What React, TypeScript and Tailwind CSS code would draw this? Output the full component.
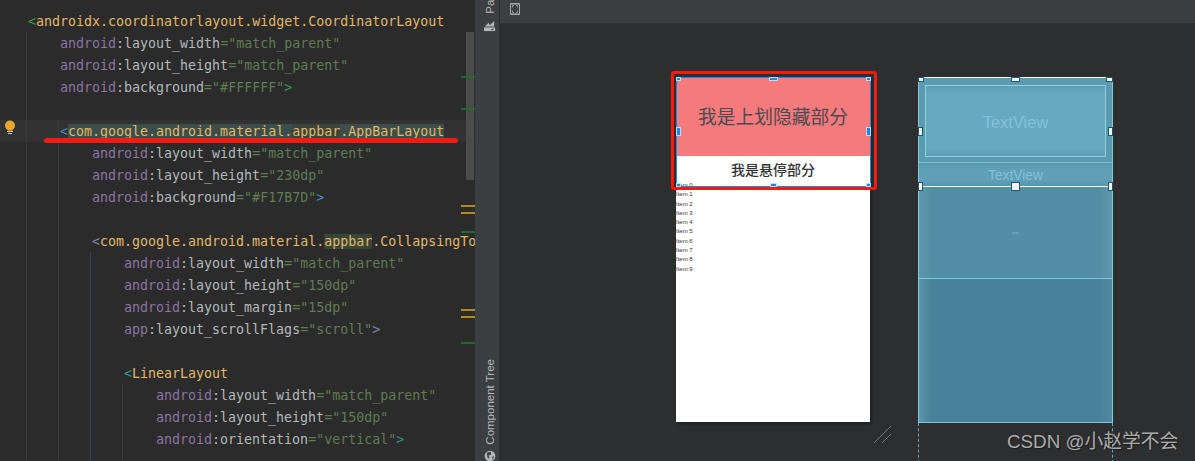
import React from "react";

type Tone = "ns" | "attr" | "val" | "tag" | "blue" | "green" | "slate" | "teal" | "hlTag" | "hlApp";
const toneClass: Record<Tone, string> = {
  ns: "text-[#8f73a3]",
  attr: "text-[#b3b9b9]",
  val: "text-[#5f7c52]",
  tag: "text-[#e5b765]",
  green: "text-[#3f9b4f]",
  blue: "text-[#4a88c7]",
  slate: "text-[#7d86b5]",
  teal: "text-[#2b9c8a]",
  hlTag: "text-[#e5b765] bg-[#3a4f4c]",
  hlApp: "text-[#e5b765] bg-[#3a4539]",
};
type Seg = [string, Tone];
const attr = (ns: string, name: string, value: string, close?: [string, Tone]): Seg[] => {
  const s: Seg[] = [[ns, "ns"], [":" + name, "attr"], ['="' + value + '"', "val"]];
  if (close) s.push(close);
  return s;
};
const indentClass = ["pl-[28px]", "pl-[60px]", "pl-[92px]", "pl-[124px]", "pl-[156px]"];

const lines: { i: number; s: Seg[]; active?: boolean }[] = [
  { i: 0, s: [["<", "green"], ["androidx.coordinatorlayout.widget.CoordinatorLayout", "tag"]] },
  { i: 1, s: attr("android", "layout_width", "match_parent") },
  { i: 1, s: attr("android", "layout_height", "match_parent") },
  { i: 1, s: attr("android", "background", "#FFFFFF", [">", "green"]) },
  { i: 0, s: [] },
  {
    i: 1,
    active: true,
    s: [
      ["<", "blue"],
      ["com.google.android.material.", "hlTag"],
      ["appbar", "hlApp"],
      [".AppBarLayout", "hlTag"],
    ],
  },
  { i: 2, s: attr("android", "layout_width", "match_parent") },
  { i: 2, s: attr("android", "layout_height", "230dp") },
  { i: 2, s: attr("android", "background", "#F17B7D", [">", "blue"]) },
  { i: 0, s: [] },
  {
    i: 2,
    s: [
      ["<", "slate"],
      ["com.google.android.material.", "tag"],
      ["appbar", "hlApp"],
      [".CollapsingToolbarLayout", "tag"],
    ],
  },
  { i: 3, s: attr("android", "layout_width", "match_parent") },
  { i: 3, s: attr("android", "layout_height", "150dp") },
  { i: 3, s: attr("android", "layout_margin", "15dp") },
  { i: 3, s: attr("app", "layout_scrollFlags", "scroll", [">", "slate"]) },
  { i: 0, s: [] },
  { i: 3, s: [["<", "teal"], ["LinearLayout", "tag"]] },
  { i: 4, s: attr("android", "layout_width", "match_parent") },
  { i: 4, s: attr("android", "layout_height", "150dp") },
  { i: 4, s: attr("android", "orientation", "vertical", [">", "teal"]) },
];

function CodePanel() {
  return (
    <div className="relative w-[475px] h-full shrink-0 overflow-hidden bg-[#2b2b2b] pt-[10px] font-['DejaVu_Sans_Mono',monospace] text-[13.3px] leading-[24px]">
      {lines.map((l, n) => (
        <div
          key={n}
          className={`h-[22px] whitespace-pre ${indentClass[l.i]} ${l.active ? "bg-[#323232]" : ""}`}
        >
          {l.s.map(([t, tone], k) => (
            <span key={k} className={toneClass[tone]}>
              {t}
            </span>
          ))}
        </div>
      ))}

      {/* indent guides */}
      <div className="absolute left-[26px] top-[32px] bottom-0 w-px bg-[#3a3a3a]" />
      <div className="absolute left-[58px] top-[120px] bottom-0 w-px bg-[#3a3a3a]" />
      <div className="absolute left-[90px] top-[252px] bottom-0 w-px bg-[#3b3f5e]" />
      <div className="absolute left-[122px] top-[384px] bottom-0 w-px bg-[#3a3a3a]" />

      {/* lightbulb */}
      <svg className="absolute left-[4px] top-[120px]" width="13" height="16" viewBox="0 0 13 16">
        <circle cx="6" cy="5.5" r="5" fill="#eaa52b" />
        <rect x="3.5" y="8" width="5" height="2.5" fill="#eaa52b" />
        <rect x="3" y="11" width="6" height="1" fill="#c9c9c9" />
        <rect x="4" y="13" width="4" height="1" fill="#c9c9c9" />
      </svg>

      {/* scrollbar */}
      <div className="absolute left-[466px] top-[32px] w-[8px] h-[148px] bg-[#4b4b4b]" />

      {/* error stripe marks */}
      <div className="absolute left-[461px] top-[76px] w-[14px] h-[2px] bg-[#1f6b2c]" />
      <div className="absolute left-[461px] top-[108px] w-[14px] h-[2px] bg-[#1f6b2c]" />
      <div className="absolute left-[461px] top-[205px] w-[14px] h-[2px] bg-[#b5891e]" />
      <div className="absolute left-[461px] top-[212px] w-[14px] h-[2px] bg-[#b5891e]" />
      <div className="absolute left-[461px] top-[231px] w-[14px] h-[2px] bg-[#1f6b2c]" />
      <div className="absolute left-[461px] top-[309px] w-[14px] h-[2px] bg-[#b5891e]" />
      <div className="absolute left-[461px] top-[316px] w-[14px] h-[2px] bg-[#b5891e]" />
      <div className="absolute left-[461px] top-[342px] w-[14px] h-[2px] bg-[#1f6b2c]" />

      {/* red annotation underline */}
      <div className="absolute left-[44px] top-[138px] w-[414px] h-[5px] rounded-full bg-[#f5190f]" />
    </div>
  );
}

function SideStrip() {
  return (
    <div className="relative w-[24px] h-full shrink-0 bg-[#3c3f41] text-[#b4b8ba] font-['Liberation_Sans',sans-serif] text-[11.5px]">
      <span className="absolute left-[8px] top-[-3px] [writing-mode:vertical-rl] rotate-180 leading-[14px]">Pal</span>
      <svg className="absolute left-[9px] top-[20px]" width="12" height="12" viewBox="0 0 13 13">
        <rect x="0" y="8" width="12" height="4" fill="#b4b8ba" />
        <rect x="8" y="9.5" width="2" height="1.5" fill="#3c3f41" />
        <path d="M1 7 L5 3 L7 7 Z M5 7 L11 1 L11 7 Z" fill="#b4b8ba" />
      </svg>
      <span className="absolute left-[8px] bottom-[16px] [writing-mode:vertical-rl] rotate-180 leading-[14px]">
        Component Tree
      </span>
      <svg className="absolute left-[9px] bottom-[-1px]" width="12" height="12" viewBox="0 0 13 13">
        <circle cx="6.5" cy="6.5" r="5.8" fill="#b4b8ba" />
        <path d="M3 3 L7 2 L8 5 L5 6 L6 9 L4 9 Z M9 7 L11 7 L9 11 Z" fill="#3c3f41" />
      </svg>
    </div>
  );
}

function Handle({ cls }: { cls: string }) {
  return <div className={`absolute bg-[#1c86f2] border border-white/70 ${cls}`} />;
}
function WhiteHandle({ cls }: { cls: string }) {
  return <div className={`absolute bg-[#f4fbff] border border-[#20566b] ${cls}`} />;
}

function DesignPhone() {
  return (
    <div className="relative w-[194px] h-[345px] shrink-0 bg-white shadow-[2px_2px_3px_rgba(0,0,0,0.35)]">
      <div className="h-[79px] bg-[#f47a7c] flex items-center justify-center text-[18.75px] text-[#4c4a52] font-['Noto_Sans_CJK_SC',sans-serif]">
        我是上划隐藏部分
      </div>
      <div className="h-[30px] flex items-start justify-center text-[14px] leading-[26px] font-medium text-[#333] font-['Noto_Sans_CJK_SC',sans-serif]">
        我是悬停部分
      </div>
      <div className="-mt-[5px] text-[6px] leading-[9.3px] text-[#333] font-['Liberation_Sans',sans-serif]">
        {["Item 0", "Item 1", "Item 2", "Item 3", "Item 4", "Item 5", "Item 6", "Item 7", "Item 8", "Item 9"].map((t) => (
          <div key={t}>{t}</div>
        ))}
      </div>

      {/* selection */}
      <div className="absolute left-0 top-0 w-[195px] h-[110px] border border-[#1c86f2]" />
      <Handle cls="left-0 top-0 w-[5px] h-[4px]" />
      <Handle cls="left-[93px] top-0 w-[9px] h-[4px]" />
      <Handle cls="left-[190px] top-0 w-[5px] h-[4px]" />
      <Handle cls="left-0 top-[50px] w-[5px] h-[9px]" />
      <Handle cls="left-[190px] top-[50px] w-[5px] h-[9px]" />
      <Handle cls="left-0 top-[106px] w-[5px] h-[4px]" />
      <Handle cls="left-[94px] top-[106px] w-[7px] h-[4px]" />
      <Handle cls="left-[190px] top-[106px] w-[5px] h-[4px]" />

      {/* red annotation box */}
      <div className="absolute -left-[5px] -top-[6px] w-[206px] h-[119px] rounded-[3px] border-[3px] border-[#f01c12]" />
    </div>
  );
}

function Blueprint() {
  return (
    <div className="relative w-[195px] h-[346px] shrink-0 flex flex-col border-x border-[#78cde0] font-['Liberation_Sans',sans-serif] text-[#82c3d8]">
      <div className="h-[85px] bg-[#5b9bb1] px-[6px] pt-[7px] border-t border-white">
        <div className="h-[72px] bg-[linear-gradient(180deg,#5f9fb6,#68a9c2_12%,#68a9c2_88%,#5f9fb6)] border border-[#8ed2e2] flex items-center justify-center text-[16.5px] pt-[3px]">
          TextView
        </div>
      </div>
      <div className="h-[24px] bg-[linear-gradient(180deg,#5895ab,#5f9fb7_25%,#5f9fb7_75%,#5895ab)] border-t border-[#7cc3d8] flex items-center justify-center text-[13.8px] pt-[3px]">
        TextView
      </div>
      <div className="h-[92px] bg-[linear-gradient(90deg,#6098ad,#528fa6_6%,#528fa6_94%,#6098ad)] border-t border-white flex items-center justify-center text-[4px] text-[#8cc3d4]">
        nac
      </div>
      <div className="flex-1 border-t border-b border-[#7cc9dc] bg-[linear-gradient(90deg,#5c95ab,#48829a_6%,#48829a_94%,#5089a0)]" />

      <WhiteHandle cls="-left-[1px] top-0 w-[6px] h-[5px]" />
      <WhiteHandle cls="left-[92px] top-0 w-[9px] h-[5px]" />
      <WhiteHandle cls="left-[187px] top-0 w-[7px] h-[5px]" />
      <WhiteHandle cls="-left-[1px] top-[50px] w-[5px] h-[9px]" />
      <WhiteHandle cls="left-[189px] top-[50px] w-[5px] h-[9px]" />
      <WhiteHandle cls="-left-[1px] top-[105px] w-[5px] h-[9px]" />
      <WhiteHandle cls="left-[92px] top-[105px] w-[9px] h-[9px]" />
      <WhiteHandle cls="left-[189px] top-[105px] w-[5px] h-[9px]" />

      {/* dashed extents */}
      <div className="absolute -left-[1px] top-full h-[40px] border-l border-dashed border-[#5fb0c6]" />
      <div className="absolute -right-[1px] top-full h-[40px] border-l border-dashed border-[#5fb0c6]" />
    </div>
  );
}

function DesignArea() {
  return (
    <div className="relative flex-1 h-full flex flex-col border-l border-[#2b2b2b] bg-[#2d2e30] overflow-hidden">
      <div className="h-[24px] shrink-0 flex items-start pt-[3px] bg-[#3c3f41] border-b border-[#2f3133] pl-[10px]">
        <svg width="10" height="12" viewBox="0 0 10 12">
          <rect x="0" y="0" width="10" height="12" rx="1" fill="#a5a9ab" />
          <rect x="1" y="1.5" width="8" height="9" fill="#3c3f41" />
          <path d="M2.5 4.5 V2.5 H4 M6 2.5 H7.5 V4.5 M7.5 7.5 V9.5 H6 M4 9.5 H2.5 V7.5" fill="none" stroke="#a5a9ab" strokeWidth="0.8" />
        </svg>
      </div>
      <div className="flex gap-[48px] pl-[176px] pt-[53px]">
        <DesignPhone />
        <Blueprint />
      </div>

      {/* resize grip */}
      <svg className="absolute left-[373px] top-[425px]" width="20" height="20" viewBox="0 0 20 20">
        <path d="M1 18 L18 1 M9 18 L18 9" stroke="#8a8c8e" strokeWidth="0.8" />
      </svg>

      {/* watermark */}
      <div className="absolute left-[507px] top-[430px] text-[18.8px] leading-[24px] whitespace-nowrap text-[#ababab] [text-shadow:1px_1px_1px_#1c1c1c] font-['Liberation_Sans','Noto_Sans_CJK_SC',sans-serif]">
        CSDN @小赵学不会
      </div>
    </div>
  );
}

export default function App() {
  return (
    <div className="w-[1195px] h-[461px] flex overflow-hidden bg-[#2d2e30]">
      <CodePanel />
      <SideStrip />
      <DesignArea />
    </div>
  );
}
